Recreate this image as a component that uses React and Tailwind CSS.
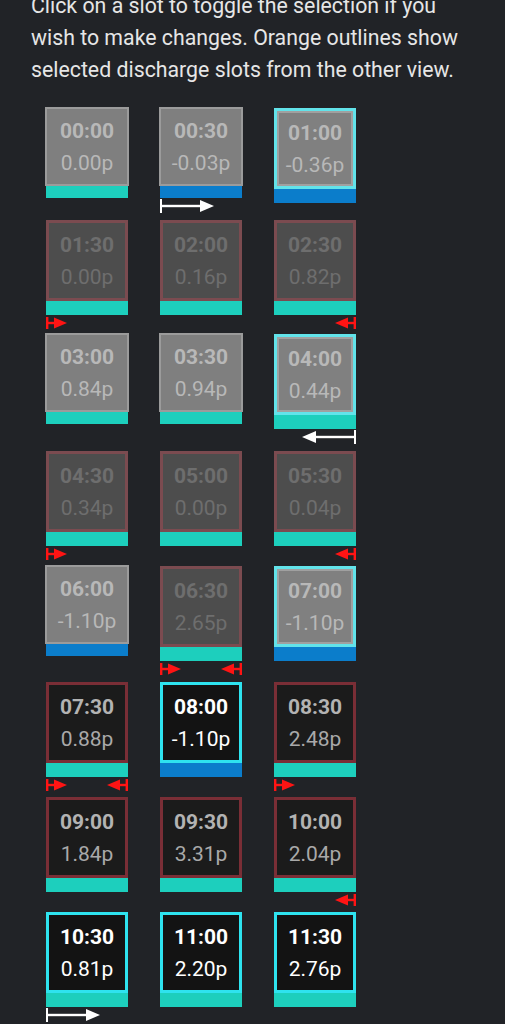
import React from "react";

const rows = [
  {
    h: "h-[112px]",
    slots: [
      { t: "00:00", p: "0.00p", v: "gray", bar: "teal" },
      { t: "00:30", p: "-0.03p", v: "gray", bar: "blue", a: ["wr"] },
      { t: "01:00", p: "-0.36p", v: "selFaded", bar: "blue" },
    ],
  },
  {
    h: "h-[114px]",
    slots: [
      { t: "01:30", p: "0.00p", v: "redFaded", bar: "teal", a: ["rr"] },
      { t: "02:00", p: "0.16p", v: "redFaded", bar: "teal" },
      { t: "02:30", p: "0.82p", v: "redFaded", bar: "teal", a: ["rl"] },
    ],
  },
  {
    h: "h-[117px]",
    slots: [
      { t: "03:00", p: "0.84p", v: "gray", bar: "teal" },
      { t: "03:30", p: "0.94p", v: "gray", bar: "teal" },
      { t: "04:00", p: "0.44p", v: "selFaded", bar: "teal", a: ["wl"] },
    ],
  },
  {
    h: "h-[115px]",
    slots: [
      { t: "04:30", p: "0.34p", v: "redFaded", bar: "teal", a: ["rr"] },
      { t: "05:00", p: "0.00p", v: "redFaded", bar: "teal" },
      { t: "05:30", p: "0.04p", v: "redFaded", bar: "teal", a: ["rl"] },
    ],
  },
  {
    h: "h-[116px]",
    slots: [
      { t: "06:00", p: "-1.10p", v: "gray", bar: "blue" },
      { t: "06:30", p: "2.65p", v: "redFaded", bar: "teal", a: ["rr", "rl"] },
      { t: "07:00", p: "-1.10p", v: "selFaded", bar: "blue" },
    ],
  },
  {
    h: "h-[115px]",
    slots: [
      { t: "07:30", p: "0.88p", v: "red", bar: "teal", a: ["rr", "rl"] },
      { t: "08:00", p: "-1.10p", v: "sel", bar: "blue" },
      { t: "08:30", p: "2.48p", v: "red", bar: "teal", a: ["rr"] },
    ],
  },
  {
    h: "h-[115px]",
    slots: [
      { t: "09:00", p: "1.84p", v: "red", bar: "teal" },
      { t: "09:30", p: "3.31p", v: "red", bar: "teal" },
      { t: "10:00", p: "2.04p", v: "red", bar: "teal", a: ["rl"] },
    ],
  },
  {
    h: "h-[115px]",
    slots: [
      { t: "10:30", p: "0.81p", v: "sel", bar: "teal", a: ["wr"] },
      { t: "11:00", p: "2.20p", v: "sel", bar: "teal" },
      { t: "11:30", p: "2.76p", v: "sel", bar: "teal" },
    ],
  },
];

function WhiteRight() {
  return (
    <svg width="54" height="14" viewBox="0 0 54 14" className="block">
      <rect x="0" y="0" width="2" height="14" fill="#ffffff" />
      <rect x="0" y="5.8" width="42" height="2.4" fill="#ffffff" />
      <polygon points="40,1 54,7 40,13" fill="#ffffff" />
    </svg>
  );
}

function WhiteLeft() {
  return (
    <svg width="54" height="14" viewBox="0 0 54 14" className="block">
      <rect x="52" y="0" width="2" height="14" fill="#ffffff" />
      <rect x="12" y="5.8" width="42" height="2.4" fill="#ffffff" />
      <polygon points="14,1 0,7 14,13" fill="#ffffff" />
    </svg>
  );
}

function RedRight() {
  return (
    <svg width="21" height="12" viewBox="0 0 21 12" className="block">
      <rect x="0" y="0" width="2.4" height="12" fill="#ff1414" />
      <rect x="0" y="4.8" width="10" height="2.4" fill="#ff1414" />
      <polygon points="8,0.5 21,6 8,11.5" fill="#ff1414" />
    </svg>
  );
}

function RedLeft() {
  return (
    <svg width="21" height="12" viewBox="0 0 21 12" className="block">
      <rect x="18.6" y="0" width="2.4" height="12" fill="#ff1414" />
      <rect x="11" y="4.8" width="10" height="2.4" fill="#ff1414" />
      <polygon points="13,0.5 0,6 13,11.5" fill="#ff1414" />
    </svg>
  );
}

function Arrows({ a = [] }) {
  const left = a.includes("rr") ? <RedRight /> : a.includes("wr") ? <WhiteRight /> : null;
  const right = a.includes("rl") ? <RedLeft /> : a.includes("wl") ? <WhiteLeft /> : null;
  return (
    <div className="mt-px flex h-[14px] items-center">
      {left}
      <div className="flex-1" />
      {right}
    </div>
  );
}

function Label({ t, p, timeCls, priceCls }) {
  return (
    <>
      <div className={`text-[21px] font-bold leading-[32px] ${timeCls}`}>{t}</div>
      <div className={`text-[21px] font-normal leading-[32px] ${priceCls}`}>{p}</div>
    </>
  );
}

function Slot({ s }) {
  const barCls = s.bar === "blue" ? "bg-[#0b7dcb]" : "bg-[#1dcfbd]";
  if (s.v === "gray") {
    return (
      <div className="flex w-[82px] flex-col">
        <div className="-mx-px flex h-[79px] flex-col items-center justify-center border-2 border-[#9b9b9b] bg-[#7f7f7f]">
          <Label t={s.t} p={s.p} timeCls="text-[#b8b8b8]" priceCls="text-[#b8b8b8]" />
        </div>
        <div className={`h-[12px] ${barCls}`} />
        <Arrows a={s.a} />
      </div>
    );
  }
  let box;
  if (s.v === "selFaded") {
    box = (
      <div className="flex h-[81px] flex-col border-[3px] border-[#62e3ea]">
        <div className="flex flex-1 flex-col items-center justify-center border-2 border-[#a0a0a0] bg-[#808080]">
          <Label t={s.t} p={s.p} timeCls="text-[#b8b8b8]" priceCls="text-[#b8b8b8]" />
        </div>
      </div>
    );
  } else if (s.v === "sel") {
    box = (
      <div className="flex h-[81px] flex-col items-center justify-center border-[3px] border-[#2ee3ef] bg-[#131313]">
        <Label t={s.t} p={s.p} timeCls="text-white" priceCls="text-white" />
      </div>
    );
  } else if (s.v === "red") {
    box = (
      <div className="flex h-[81px] flex-col items-center justify-center border-[3px] border-[#7a2e36] bg-[#1b1b1b]">
        <Label t={s.t} p={s.p} timeCls="text-[#b3b3b3]" priceCls="text-[#a9a9a9]" />
      </div>
    );
  } else {
    box = (
      <div className="flex h-[81px] flex-col items-center justify-center border-[3px] border-[#7b4b50] bg-[#4d4d4d]">
        <Label t={s.t} p={s.p} timeCls="text-[#6e6e6e]" priceCls="text-[#6e6e6e]" />
      </div>
    );
  }
  return (
    <div className="mt-px flex w-[82px] flex-col">
      {box}
      <div className={`h-[14px] ${barCls}`} />
      <Arrows a={s.a} />
    </div>
  );
}

export default function App() {
  return (
    <div
      className="h-[1024px] w-[505px] overflow-hidden bg-[#212327]"
      style={{ fontFamily: "Roboto, 'Noto Sans', sans-serif" }}
    >
      <p className="mt-[-10px] px-[31px] text-[21.3px] leading-[32px] text-[#e6e6e6]">
        Click on a slot to toggle the selection if you wish to make changes. Orange outlines show selected discharge
        slots from the other view.
      </p>
      <div className="mt-[21px] flex flex-col">
        {rows.map((r, i) => (
          <div key={i} className={`flex items-start gap-[32px] pl-[46px] ${r.h}`}>
            {r.slots.map((s) => (
              <Slot key={s.t} s={s} />
            ))}
          </div>
        ))}
      </div>
    </div>
  );
}
